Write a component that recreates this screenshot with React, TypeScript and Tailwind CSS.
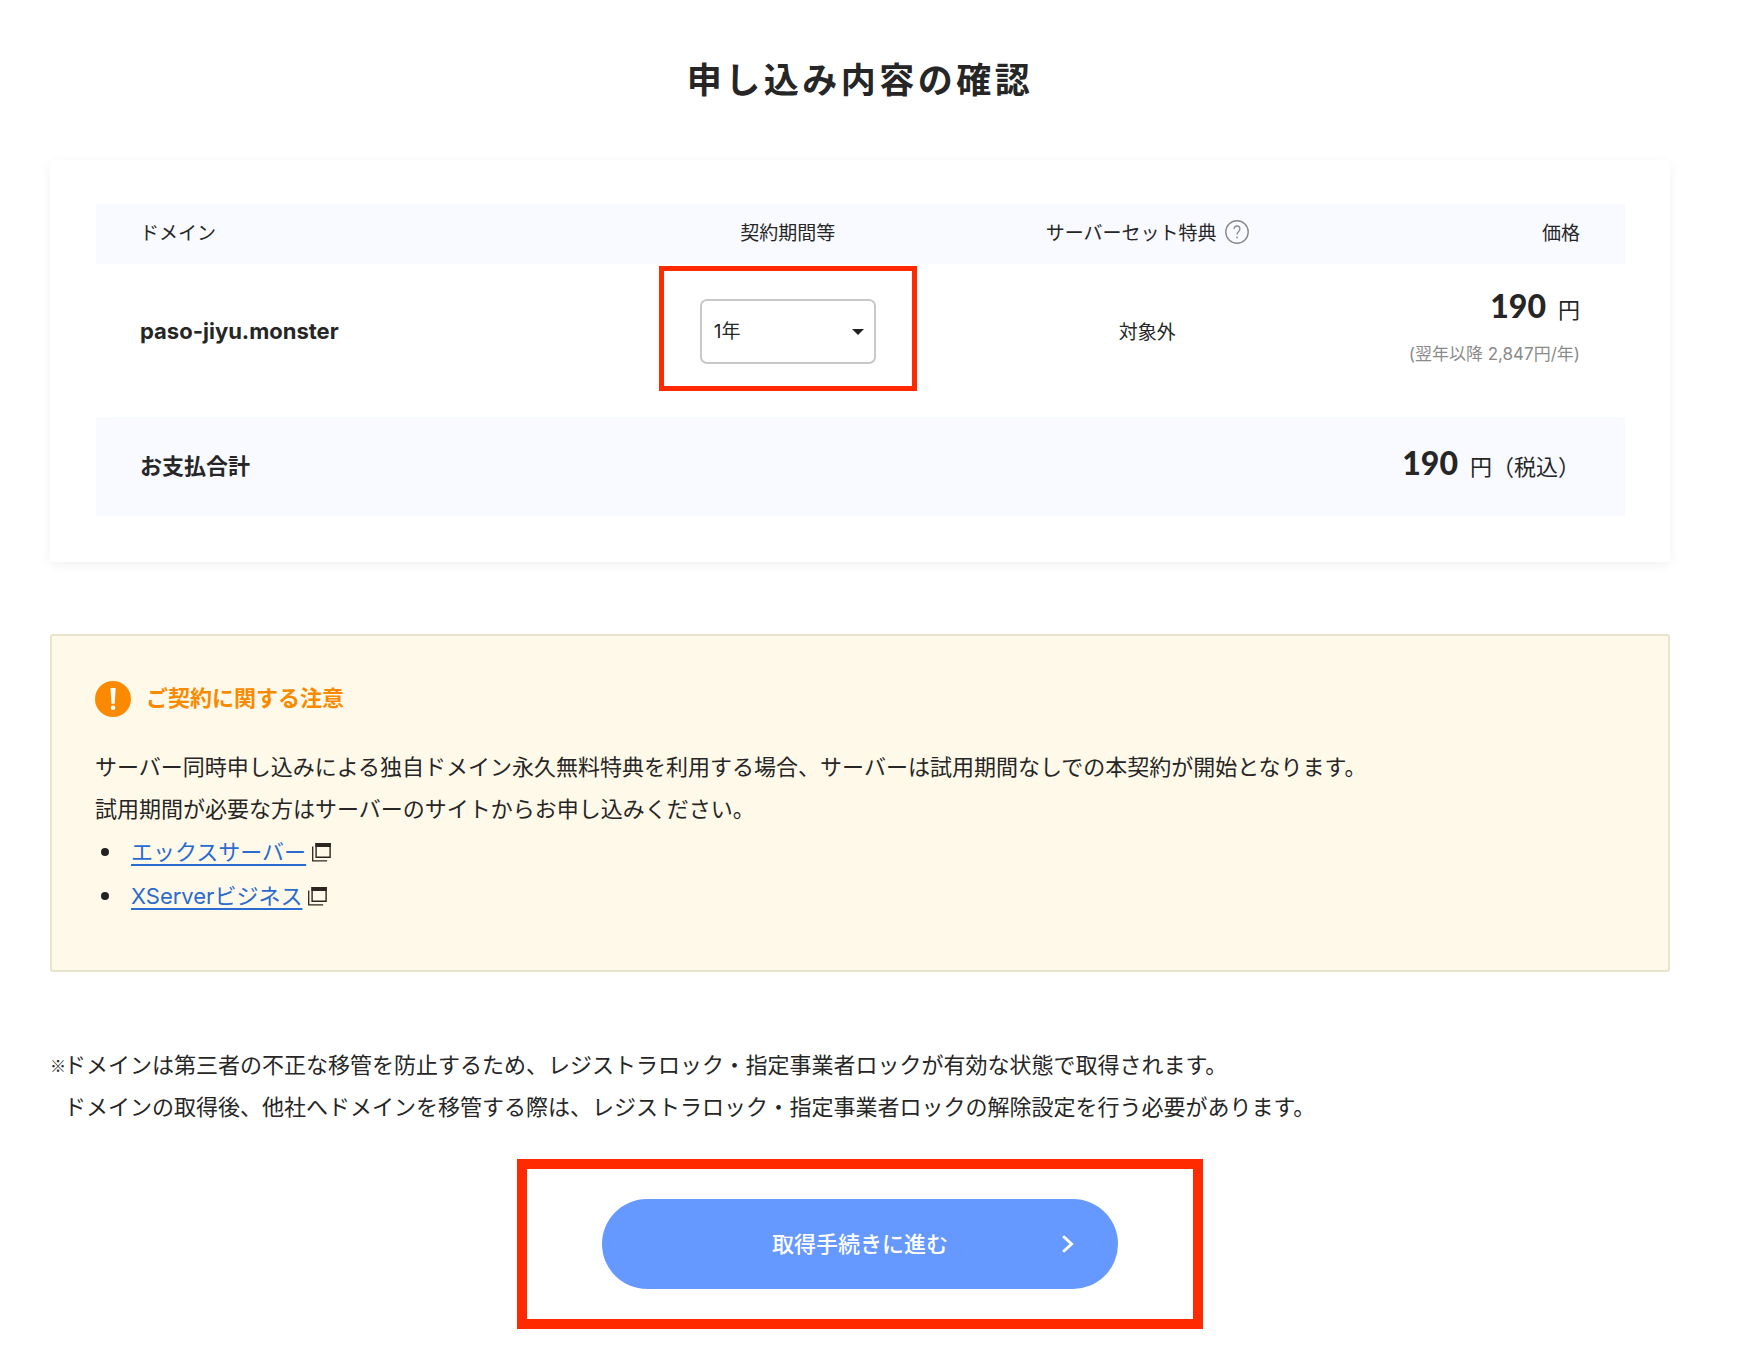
import { useState } from "react";

// ── Static config ──────────────────────────────────────────────────

const PERIODS = ["1年", "2年", "3年", "4年", "5年"];

const SERVER_LINKS = [
  { href: "#xserver", label: "エックスサーバー" },
  { href: "#xserver-business", label: "XServerビジネス" },
];

// ── Icons ──────────────────────────────────────────────────────────

function HelpIcon() {
  return (
    <svg viewBox="0 0 24 24" className="size-6" fill="none" aria-hidden="true">
      <circle cx="12" cy="12" r="11.2" stroke="#8a8a8a" strokeWidth="1.4" />
      <path
        d="M9.2 9C9.2 7.2 10.400 6 12 6s2.900 1.200 2.900 2.900c0 1.300-.7 2-1.500 2.800-.9.8-1.400 1.400-1.400 2.900"
        stroke="#8a8a8a"
        strokeWidth="1.3"
      />
      <circle cx="12" cy="17.4" r="0.9" fill="#8a8a8a" />
    </svg>
  );
}

function AlertIcon() {
  return (
    <svg viewBox="0 0 36 36" className="size-9 shrink-0" aria-hidden="true">
      <circle cx="18" cy="18" r="18" fill="#fb8a00" />
      <path d="M15.5 7h5.2l-1 15.800h-3.200z" fill="#fff" />
      <circle cx="18.1" cy="26.7" r="2.3" fill="#fff" />
    </svg>
  );
}

function NewWindowIcon() {
  return (
    <svg viewBox="0 0 19 19" className="size-[19px]" fill="none" stroke="#2b2620" aria-hidden="true">
      <path d="M4.1.7h14v13.6h-14z" strokeWidth="1.4" />
      <path d="M3.4 2h15.400" strokeWidth="4" />
      <path d="M.7 3.500v14.300h14.400" strokeWidth="1.3" />
    </svg>
  );
}

function ChevronIcon() {
  return (
    <svg viewBox="0 0 12 18" className="h-[18px] w-3" fill="none" aria-hidden="true">
      <path d="M1.200 1.200 9.600 9l-8.400 7.800" stroke="#fff" strokeWidth="2.800" />
    </svg>
  );
}

// ── Parts ──────────────────────────────────────────────────────────

function PeriodSelect() {
  const [period, setPeriod] = useState(PERIODS[0]);

  return (
    <div className="relative">
      <select
        id="period"
        value={period}
        onChange={(e) => setPeriod(e.target.value)}
        className="block h-[65px] w-44 appearance-none rounded-[7px] border-2 border-[#c8c8c8] bg-white pt-[2px] pl-3 text-[19px]"
      >
        {PERIODS.map((p) => (
          <option key={p}>{p}</option>
        ))}
      </select>
      <svg
        viewBox="0 0 12 6"
        className="pointer-events-none absolute top-[30px] right-3 h-1.5 w-3"
        aria-hidden="true"
      >
        <path d="M0 0h12L6 6z" fill="#222" />
      </svg>
    </div>
  );
}

function OrderTable() {
  return (
    <table className="w-full table-fixed border-collapse text-[19px]">
      <colgroup>
        <col className="w-[33.5%]" />
        <col className="w-[23.5%]" />
        <col className="w-[23.5%]" />
        <col className="w-[19.5%]" />
      </colgroup>
      <thead>
        <tr className="h-[60px] bg-[#f8faff]">
          <th className="pl-[44px] text-left font-normal">ドメイン</th>
          <th className="font-normal">
            <label htmlFor="period">契約期間等</label>
          </th>
          <th className="font-normal">
            <span className="flex items-center justify-center gap-2">
              サーバーセット特典
              <button type="button" aria-label="ヘルプ" className="pb-1">
                <HelpIcon />
              </button>
            </span>
          </th>
          <th className="pr-[45px] text-right font-normal">価格</th>
        </tr>
      </thead>
      <tbody>
        <tr className="h-[153px]">
          <td className="pb-[18px] pl-[44px] text-[22px] font-bold">paso-jiyu.monster</td>
          <td className="pt-[2px] pb-[26px]">
            <div className="mx-auto flex w-[258px] justify-center border-[5px] border-[#ff2a00] pt-7 pb-[22px]">
              <PeriodSelect />
            </div>
          </td>
          <td className="pb-[14px] text-center">対象外</td>
          <td className="pr-[45px] pb-[26px] text-right whitespace-nowrap">
            <p className="text-[22px] leading-[48px]">
              <span className="mr-3 font-[Lato] text-[32px] font-black">190</span>円
            </p>
            <p className="text-[17px] leading-[40px] text-[#8a8a8a]">(翌年以降 2,847円/年)</p>
          </td>
        </tr>
      </tbody>
      <tfoot>
        <tr className="h-[99px] bg-[#f8faff]">
          <th className="pl-[44px] text-left text-[22px] font-bold">お支払合計</th>
          <td colSpan={3} className="pr-[45px] pb-1 text-right text-[22px] leading-[48px]">
            <span className="mr-3 font-[Lato] text-[32px] font-black">190</span>円（税込）
          </td>
        </tr>
      </tfoot>
    </table>
  );
}

function ContractNotice() {
  return (
    <section className="mt-[72px] rounded-[3px] border-2 border-[#e9e3cc] bg-[#fff9e9] px-[43px] pt-[45px] pb-[52px]">
      <h2 className="flex items-center gap-[15px] text-[22px] font-bold text-[#f98a00]">
        <AlertIcon />
        <span className="pb-[2px]">ご契約に関する注意</span>
      </h2>
      <p className="mt-[29px] text-[22px] leading-[42px]">
        サーバー同時申し込みによる独自ドメイン永久無料特典を利用する場合、サーバーは試用期間なしでの本契約が開始となります。
        <br />
        試用期間が必要な方はサーバーのサイトからお申し込みください。
      </p>
      <ul className="text-[22px] leading-[44px]">
        {SERVER_LINKS.map((link) => (
          <li key={link.href} className="flex items-center">
            <span className="mr-[22px] ml-1.5 size-2 rounded-full bg-[#222]" />
            <a href={link.href} className="text-[#2a6bd0] underline decoration-2 underline-offset-4">
              {link.label}
            </a>
            <span className="ml-1.5">
              <NewWindowIcon />
            </span>
          </li>
        ))}
      </ul>
    </section>
  );
}

// ── Page ───────────────────────────────────────────────────────────

export default function App() {
  return (
    <main className="bg-white pt-12 pr-[72px] pb-8 pl-[50px] font-[Inter,'Noto_Sans_CJK_JP',sans-serif] text-[#262626]">
      <h1 className="text-center text-[35px] leading-[64px] font-bold tracking-widest">申し込み内容の確認</h1>

      <section className="mt-12 rounded-[3px] pt-[44px] pr-[45px] pb-[46px] pl-[46px] shadow-[0_3px_12px_rgba(0,0,0,0.06)]">
        <OrderTable />
      </section>

      <ContractNotice />

      <div className="mt-[72px] flex text-[22px] leading-[42px]">
        <span className="w-3.5 font-['Noto_Sans_CJK_JP',sans-serif] text-[16px] font-bold">※</span>
        <p>
          ドメインは第三者の不正な移管を防止するため、レジストラロック・指定事業者ロックが有効な状態で取得されます。
          <br />
          ドメインの取得後、他社へドメインを移管する際は、レジストラロック・指定事業者ロックの解除設定を行う必要があります。
        </p>
      </div>

      <div className="mx-auto mt-[31px] w-fit border-[10px] border-[#ff2a00] px-[75px] py-[30px]">
        <button
          type="button"
          className="grid h-[90px] w-[516px] grid-cols-[1fr_auto_1fr] items-center rounded-full bg-[#6699ff] px-11 text-[22px] font-medium text-white"
        >
          <span className="col-start-2">取得手続きに進む</span>
          <span className="justify-self-end">
            <ChevronIcon />
          </span>
        </button>
      </div>
    </main>
  );
}
